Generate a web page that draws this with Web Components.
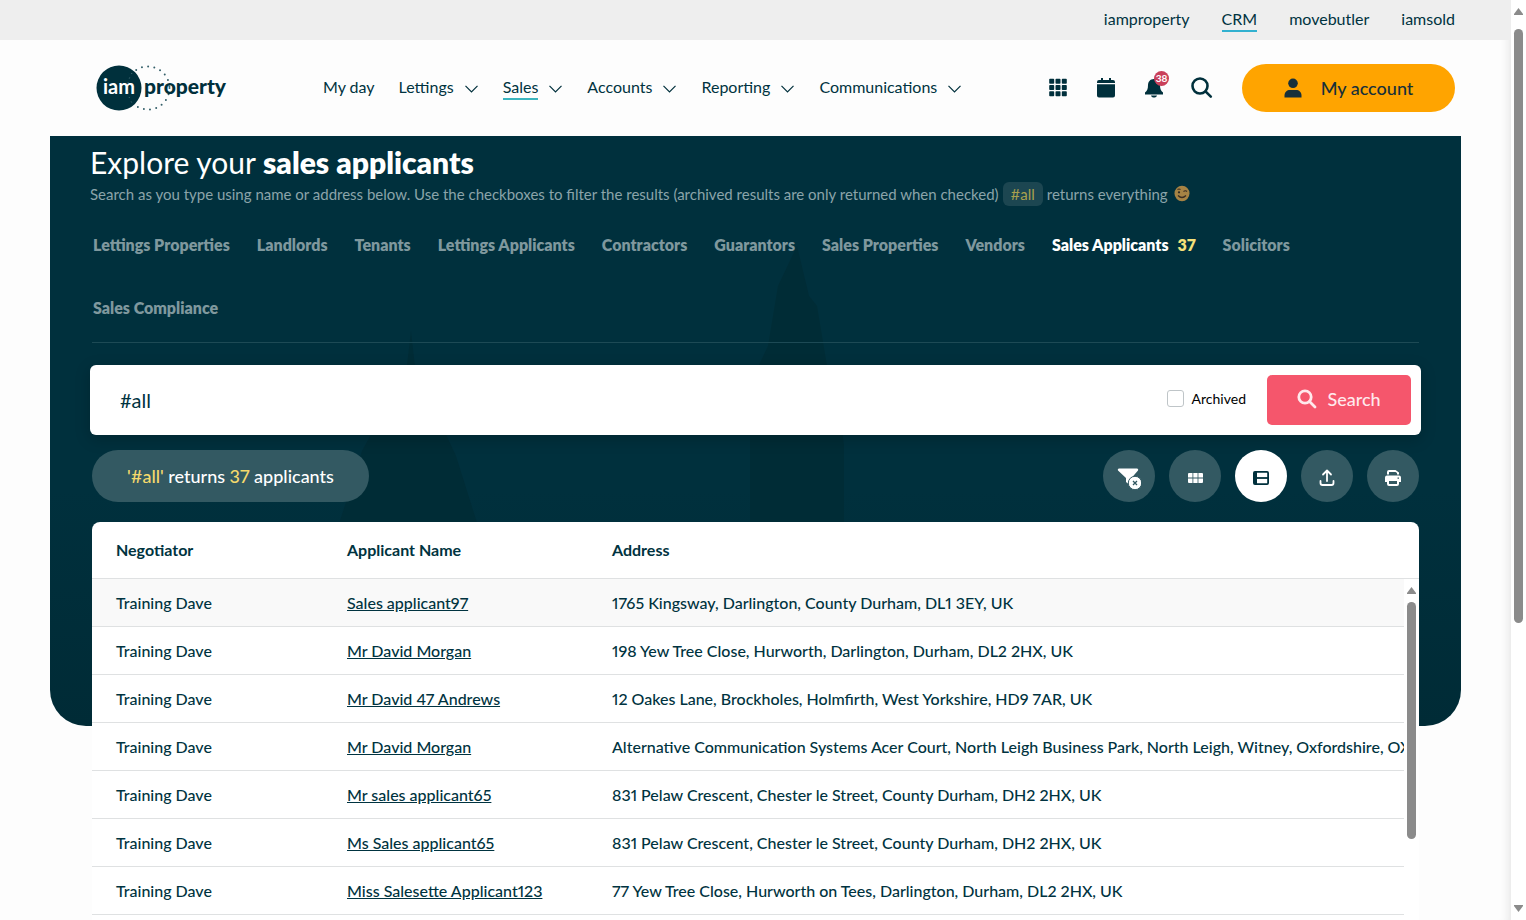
<!DOCTYPE html>
<html lang="en">
<head>
<meta charset="utf-8">
<title>iamproperty CRM</title>
<style>
html, body { margin: 0; height: 100%; }
body { background: #fdfdfd; color: #003340; font: 16px/24px Lato, "Open Sans", sans-serif; font-variant-numeric: proportional-nums; overflow: hidden; }
</style>
</head>
<body>
<crm-app></crm-app>
<script>
function define(name, html, setup) {
  const template = document.createElement('template');
  template.innerHTML = html;
  customElements.define(name, class extends HTMLElement {
    constructor() {
      super();
      this.attachShadow({ mode: 'open' }).append(template.content.cloneNode(true));
    }
    connectedCallback() {
      if (setup && !this.ready) { this.ready = true; setup(this, this.shadowRoot); }
    }
  });
}

define('top-bar', `
<style>
:host { display: block; background: #eee; }
nav { display: flex; justify-content: flex-end; gap: 32px; height: 40px; padding: 0 56px; box-sizing: border-box; align-items: center; }
a { color: inherit; text-decoration: none; line-height: 20px; border-bottom: 2px solid transparent; padding: 1px 0; }
a.on { border-color: #32b1d0; }
</style>
<nav aria-label="Products"><a href="#iamproperty">iamproperty</a><a href="#crm" class="on">CRM</a><a href="#movebutler">movebutler</a><a href="#iamsold">iamsold</a></nav>`);

define('brand-logo', `
<style>
:host { display: block; width: 132px; height: 48px; }
a, svg { display: block; }
text { font: 900 21px Lato, sans-serif; }
</style>
<a href="#home" aria-label="iamproperty home"><svg width="132" height="48" viewBox="0 0 132 48">
<circle cx="53" cy="24" r="21.500" fill="none" stroke="#35606a" stroke-width="2" stroke-linecap="round" stroke-dasharray="0 6.3"/>
<circle cx="24" cy="24" r="22.500" fill="#00303c"/>
<path d="M37 9q-9 15 0 30" fill="none" stroke="#527983" stroke-width="1" stroke-dasharray="1 4"/>
<text x="8" y="30" fill="#fff" style="font-weight:700;font-size:20px">iam</text>
<text x="49" y="30" fill="#00303c">property</text>
</svg></a>`);

define('nav-item', `
<style>
:host { display: block; }
a { display: flex; align-items: center; gap: 10px; color: inherit; text-decoration: none; line-height: 20px; }
span { border-bottom: 2px solid transparent; padding: 1px 0; }
:host([current]) span { border-color: #3bb5bf; }
svg { display: none; }
:host([menu]) svg { display: block; margin-top: 2px; }
</style>
<a href="#"><span><slot></slot></span><svg width="15" height="8" viewBox="0 0 15 8" fill="none" stroke="#00303c" stroke-width="1.200"><path d="M1.500 .8l6 6 6-6"/></svg></a>`,
(el, root) => { root.querySelector('a').href = '#' + el.textContent.toLowerCase().replace(' ', '-'); });

define('site-header', `
<style>
:host { display: flex; align-items: center; height: 96px; padding: 0 56px 0 95px; }
nav { display: flex; gap: 24px; margin-left: 96px; flex: 1; }
.icons { display: flex; gap: 24px; margin-right: 28px; }
button { font: inherit; color: inherit; border: 0; background: none; padding: 0; cursor: pointer; }
.icons button { position: relative; width: 24px; height: 24px; }
svg { display: block; }
.count { position: absolute; left: 12px; top: -5px; width: 15px; height: 15px; border-radius: 8px; background: #c9405a; color: #fff; font-size: 10px; line-height: 15px; font-weight: 700; text-align: center; }
.account { display: flex; align-items: center; justify-content: center; gap: 19px; width: 213px; height: 48px; padding-bottom: 1px; border-radius: 24px; background: #ffa400; font-size: 18px; font-weight: 500; color: #17303a; }
</style>
<brand-logo></brand-logo>
<nav aria-label="Main"><nav-item>My day</nav-item><nav-item menu>Lettings</nav-item><nav-item menu current>Sales</nav-item><nav-item menu>Accounts</nav-item><nav-item menu>Reporting</nav-item><nav-item menu>Communications</nav-item></nav>
<div class="icons">
<button aria-label="Apps"><svg width="24" height="24" fill="#00303c" stroke="#00303c" stroke-width="1.600" stroke-linejoin="round"><path d="M4 3.500h3.400v3.400H4zM10.300 3.500h3.400v3.400h-3.400zM16.600 3.500H20v3.400h-3.400zM4 9.800h3.400v3.400H4zM10.300 9.800h3.400v3.400h-3.400zM16.600 9.800H20v3.400h-3.400zM4 16.100h3.400v3.400H4zM10.300 16.100h3.400v3.400h-3.400zM16.600 16.100H20v3.400h-3.400z"/></svg></button>
<button aria-label="Calendar"><svg width="24" height="24" fill="#00303c"><path d="M7 2h2v2h6V2h2v2h2a2 2 0 0 1 2 2v1H3V6a2 2 0 0 1 2-2h2zM3 8.200h18V19.500a2 2 0 0 1-2 2H5a2 2 0 0 1-2-2z"/></svg></button>
<button aria-label="Notifications"><svg width="24" height="24" fill="#00303c"><path d="M12 3c-4 0-6 3-6 6 0 4-1 6-3 7.500V18.500h18v-2C19 15 18 13 18 9c0-3-2-6-6-6zM9 19.500h6c-.4 1.500-1.500 2-3 2s-2.600-.5-3-2z"/></svg><span class="count">38</span></button>
<button aria-label="Search"><svg width="24" height="24" fill="none" stroke="#00303c" stroke-width="2.600"><circle cx="10" cy="10" r="7.500"/><path d="M15.500 15.300l5.300 5.300" stroke-linecap="round"/></svg></button>
</div>
<button class="account"><svg width="18" height="20" viewBox="0 0 18 20" fill="#17303a"><circle cx="9" cy="5.300" r="4.800"/><path d="M.5 19.500v-2c0-3.500 2.500-5.500 5.500-5.500h6c3 0 5.500 2 5.500 5.500v2z"/></svg>My account</button>`);

define('hero-intro', `
<style>
:host { display: block; color: #fff; }
h1 { margin: 0; font-size: 30px; line-height: 40px; font-weight: 400; padding-top: 6px; }
b { font-weight: 800; }
p { margin: 0; color: #8ba4aa; font-size: 15px; line-height: 24px; display: flex; gap: 4px; }
code { font: inherit; color: #a8a04e; background: #1c4651; border-radius: 6px; padding: 0 8px; }
svg { margin: 3px 0 0 2px; }
</style>
<h1>Explore your <b>sales applicants</b></h1>
<p><span>Search as you type using name or address below. Use the checkboxes to filter the results (archived results are only returned when checked)</span><code>#all</code><span>returns everything</span>
<svg width="16" height="17" viewBox="0 0 16 17" role="img" aria-label="winking face"><ellipse cx="8" cy="8.500" rx="7.500" ry="7.800" fill="#a68344"/><path d="M3.500 4.500q1.500-1 3 0M9.500 6.500q2-1.500 3.500 0M4 10.500q4 4 8 0" fill="none" stroke="#392d22" stroke-width="1.200"/><circle cx="5" cy="7.300" r="1.100" fill="#2c2721"/></svg></p>`);

define('result-tab', `
<style>
:host { display: block; }
a { display: flex; gap: 9px; color: #7f989e; font-weight: 800; text-decoration: none; }
:host([current]) a { color: #fff; }
span { color: #f5e07a; }
span:empty { display: none; }
</style>
<a href="#"><slot></slot><span></span></a>`,
(el, root) => {
  root.querySelector('a').href = '#' + el.textContent.toLowerCase().replace(' ', '-');
  root.querySelector('span').textContent = el.getAttribute('count') || '';
});

define('result-tabs', `
<style>
:host { display: block; border-bottom: 1px solid #1d4a55; margin: 27px 2px 0; }
nav { display: flex; flex-wrap: wrap; gap: 39px 27px; padding: 0 100px 22px 1px; }
</style>
<nav aria-label="Record types"><result-tab>Lettings Properties</result-tab><result-tab>Landlords</result-tab><result-tab>Tenants</result-tab><result-tab>Lettings Applicants</result-tab><result-tab>Contractors</result-tab><result-tab>Guarantors</result-tab><result-tab>Sales Properties</result-tab><result-tab>Vendors</result-tab><result-tab current count="37">Sales Applicants</result-tab><result-tab>Solicitors</result-tab><result-tab>Sales Compliance</result-tab></nav>`);

define('search-box', `
<style>
:host { display: block; margin-top: 22px; }
form { display: flex; align-items: center; height: 70px; box-sizing: border-box; padding: 10px; background: #fff; border-radius: 6px; box-shadow: 0 4px 16px #0003; }
.query { flex: 1; min-width: 0; border: 0; outline: 0; padding: 0 20px; height: 48px; font: 20px/24px Lato, sans-serif; color: #003340; background: none; }
label { display: flex; align-items: center; gap: 8px; color: #000; font-size: 14px; margin: 0 21px 3px 0; line-height: 20px; }
.tick { appearance: none; width: 17px; height: 17px; margin: 0; border: 1px solid #bfc5c8; border-radius: 3px; background: #fff; }
button { display: flex; align-items: center; justify-content: center; gap: 10px; width: 144px; height: 50px; padding: 0 0 2px; border: 0; border-radius: 5px; background: #f5566c; color: #ffe9ec; font: 500 18px/24px Lato, sans-serif; }
</style>
<form onsubmit="return false">
<input class="query" type="text" value="#all" aria-label="Search applicants">
<label><input class="tick" type="checkbox">Archived</label>
<button type="submit"><svg width="20" height="20" fill="none" stroke="#ffe9ec" stroke-width="2.800"><circle cx="8" cy="8" r="6.200"/><path d="M12.500 12.500l5.500 5.500" stroke-linecap="round"/></svg>Search</button>
</form>`);

define('tool-button', `
<style>
:host { display: block; }
button { display: grid; place-items: center; width: 52px; height: 52px; padding: 4px 0 0; border: 0; border-radius: 26px; background: #335962; color: #fff; }
:host([current]) button { background: #fff; color: #00303c; }
</style>
<button><slot></slot></button>`,
(el, root) => root.querySelector('button').setAttribute('aria-label', el.getAttribute('label')));

define('result-bar', `
<style>
:host { display: flex; justify-content: space-between; margin: 15px 2px 0; }
.summary { height: 52px; border-radius: 26px; padding: 0 35px; background: #335962; color: #fff; font-size: 18px; line-height: 52px; font-weight: 500; }
.summary b { color: #f5d96c; font-weight: 500; }
.tools { display: flex; gap: 14px; }
svg { display: block; }
</style>
<div class="summary"><b>'#all'</b> returns <b>37</b> applicants</div>
<div class="tools">
<tool-button label="Clear filters"><svg width="24" height="24" viewBox="0 0 24 24"><path d="M1 4.500C.5 3.500 1 2.500 2 2.500h18c1 0 1.500 1 1 2L14.500 12v8.500L9 16v-4z" fill="currentColor"/><circle cx="18" cy="17" r="6.700" fill="#fff" stroke="#335962"/><path d="M16 15l4 4M20 15l-4 4" stroke="#335962" stroke-width="1.300"/></svg></tool-button>
<tool-button label="Grid view"><svg width="15" height="10" fill="currentColor"><path d="M1 0h3.500v4.500H0V1q0-1 1-1zM5.300 0h4.300v4.500H5.300zM10.400 0H14q1 0 1 1v3.500h-4.600zM0 5.500h4.500V10H1q-1 0-1-1zM5.300 5.500h4.300V10H5.300zM10.400 5.500H15V9q0 1-1 1h-3.600z"/></svg></tool-button>
<tool-button current label="List view"><svg width="16" height="14" fill="none" stroke="currentColor" stroke-width="1.800"><rect x=".9" y=".9" width="14.200" height="12.200" rx="1"/><path d="M4 7h11"/><path d="M2.500 1v12" stroke-width="3"/></svg></tool-button>
<tool-button label="Export"><svg width="16" height="18" fill="none" stroke="currentColor" stroke-width="1.800" stroke-linecap="round" stroke-linejoin="round"><path d="M8 12V2M4 5.500L8 1.500l4 4M1.500 12v2q0 2 2 2h9q2 0 2-2v-2"/></svg></tool-button>
<tool-button label="Print"><svg width="16" height="16" fill="currentColor"><path d="M2 4.500V2q0-2 2-2h6.500L14 2.500v2h-2V3l-1.500-1H4v2.500z"/><path fill-rule="evenodd" d="M2 5.500h12q2 0 2 2V12h-2v2q0 2-2 2H4q-2 0-2-2v-2H0V7.500q0-2 2-2zM4 11v3h8v-3zM12.500 7.500v1.300H14V7.500z"/></svg></tool-button>
</div>`);

define('scroll-track', `
<style>
:host { display: flex; flex-direction: column; align-items: center; width: 15px; background: #fff; box-sizing: border-box; padding: 8px 0; }
.thumb { width: 9px; border-radius: 5px; background: #8b8b8b; margin: var(--gap, 8px) 0 auto; flex: 0 0 var(--thumb, 100px); }
svg { flex: none; display: block; }
</style>
<svg width="9" height="7" fill="#8b8b8b"><path d="M4.500 0L9 6v1H0V6z"/></svg><div class="thumb"></div><svg width="9" height="7" fill="#8b8b8b"><path d="M4.500 7L9 1V0H0v1z"/></svg>`);

define('applicant-table', `
<style>
:host { display: block; position: relative; margin: 20px 2px 0; min-height: 640px; background: #fff; border-radius: 8px 8px 0 0; overflow: hidden; }
table { width: 100%; border-collapse: separate; border-spacing: 0; table-layout: fixed; }
th, td { text-align: left; padding: 0 0 0 24px; border-bottom: 1px solid #dfe1e2; white-space: nowrap; overflow: hidden; height: 47px; font-weight: 500; }
th { height: 56px; font-weight: 700; }
.negotiator { width: 207px; }
.name { width: 241px; }
tbody tr:first-child td { background: #f9f9f9; }
a { color: inherit; }
scroll-track { position: absolute; top: 57px; right: 0; bottom: 0; --thumb: 237px; }
</style>
<table><thead><tr><th class="negotiator">Negotiator</th><th class="name">Applicant Name</th><th>Address</th></tr></thead><tbody></tbody></table>
<scroll-track></scroll-track>`,
(el, root) => {
  const rows = [
    ['Sales applicant97', '1765 Kingsway, Darlington, County Durham, DL1 3EY, UK'],
    ['Mr David Morgan', '198 Yew Tree Close, Hurworth, Darlington, Durham, DL2 2HX, UK'],
    ['Mr David 47 Andrews', '12 Oakes Lane, Brockholes, Holmfirth, West Yorkshire, HD9 7AR, UK'],
    ['Mr David Morgan', 'Alternative Communication Systems Acer Court, North Leigh Business Park, North Leigh, Witney, Oxfordshire, OX2'],
    ['Mr sales applicant65', '831 Pelaw Crescent, Chester le Street, County Durham, DH2 2HX, UK'],
    ['Ms Sales applicant65', '831 Pelaw Crescent, Chester le Street, County Durham, DH2 2HX, UK'],
    ['Miss Salesette Applicant123', '77 Yew Tree Close, Hurworth on Tees, Darlington, Durham, DL2 2HX, UK']
  ];
  const body = root.querySelector('tbody');
  for (const [name, address] of rows) {
    const tr = body.insertRow();
    tr.insertCell().textContent = 'Training Dave';
    const link = document.createElement('a');
    link.href = '#applicant';
    link.textContent = name;
    tr.insertCell().append(link);
    tr.insertCell().textContent = address;
  }
});

define('crm-app', `
<style>
:host { display: grid; grid-template-columns: minmax(0, 1fr) 15px; height: 100vh; }
.page { overflow: hidden; box-shadow: inset -10px 0 10px -8px #e4e4e4; }
main { display: grid; margin: 0 50px; }
.backdrop, .content { grid-area: 1 / 1; min-width: 0; }
.backdrop { height: 590px; border-radius: 0 0 36px 36px; overflow: hidden; background: linear-gradient(#00303d 60%, #002b36); }
.backdrop svg { display: block; width: 100%; height: 100%; }
.content { padding: 0 40px; }
scroll-track { --thumb: 594px; --gap: 14px; }
</style>
<div class="page"><top-bar></top-bar><site-header></site-header>
<main><div class="backdrop"><svg viewBox="0 0 1411 590" preserveAspectRatio="xMinYMin slice" fill="#002c36" aria-hidden="true"><path d="M361 195l5 45 12 20 28 60 22 70 14 200H280l10-205 22-70 30-55 14-22zM747 110l12 50 8 10 10 60 10 20 7 60v280h-94V300l4-60 14-30 10-60z"/></svg></div><div class="content"><hero-intro></hero-intro><result-tabs></result-tabs><search-box></search-box><result-bar></result-bar><applicant-table></applicant-table></div></main></div>
<scroll-track></scroll-track>`);
</script>
</body>
</html>
